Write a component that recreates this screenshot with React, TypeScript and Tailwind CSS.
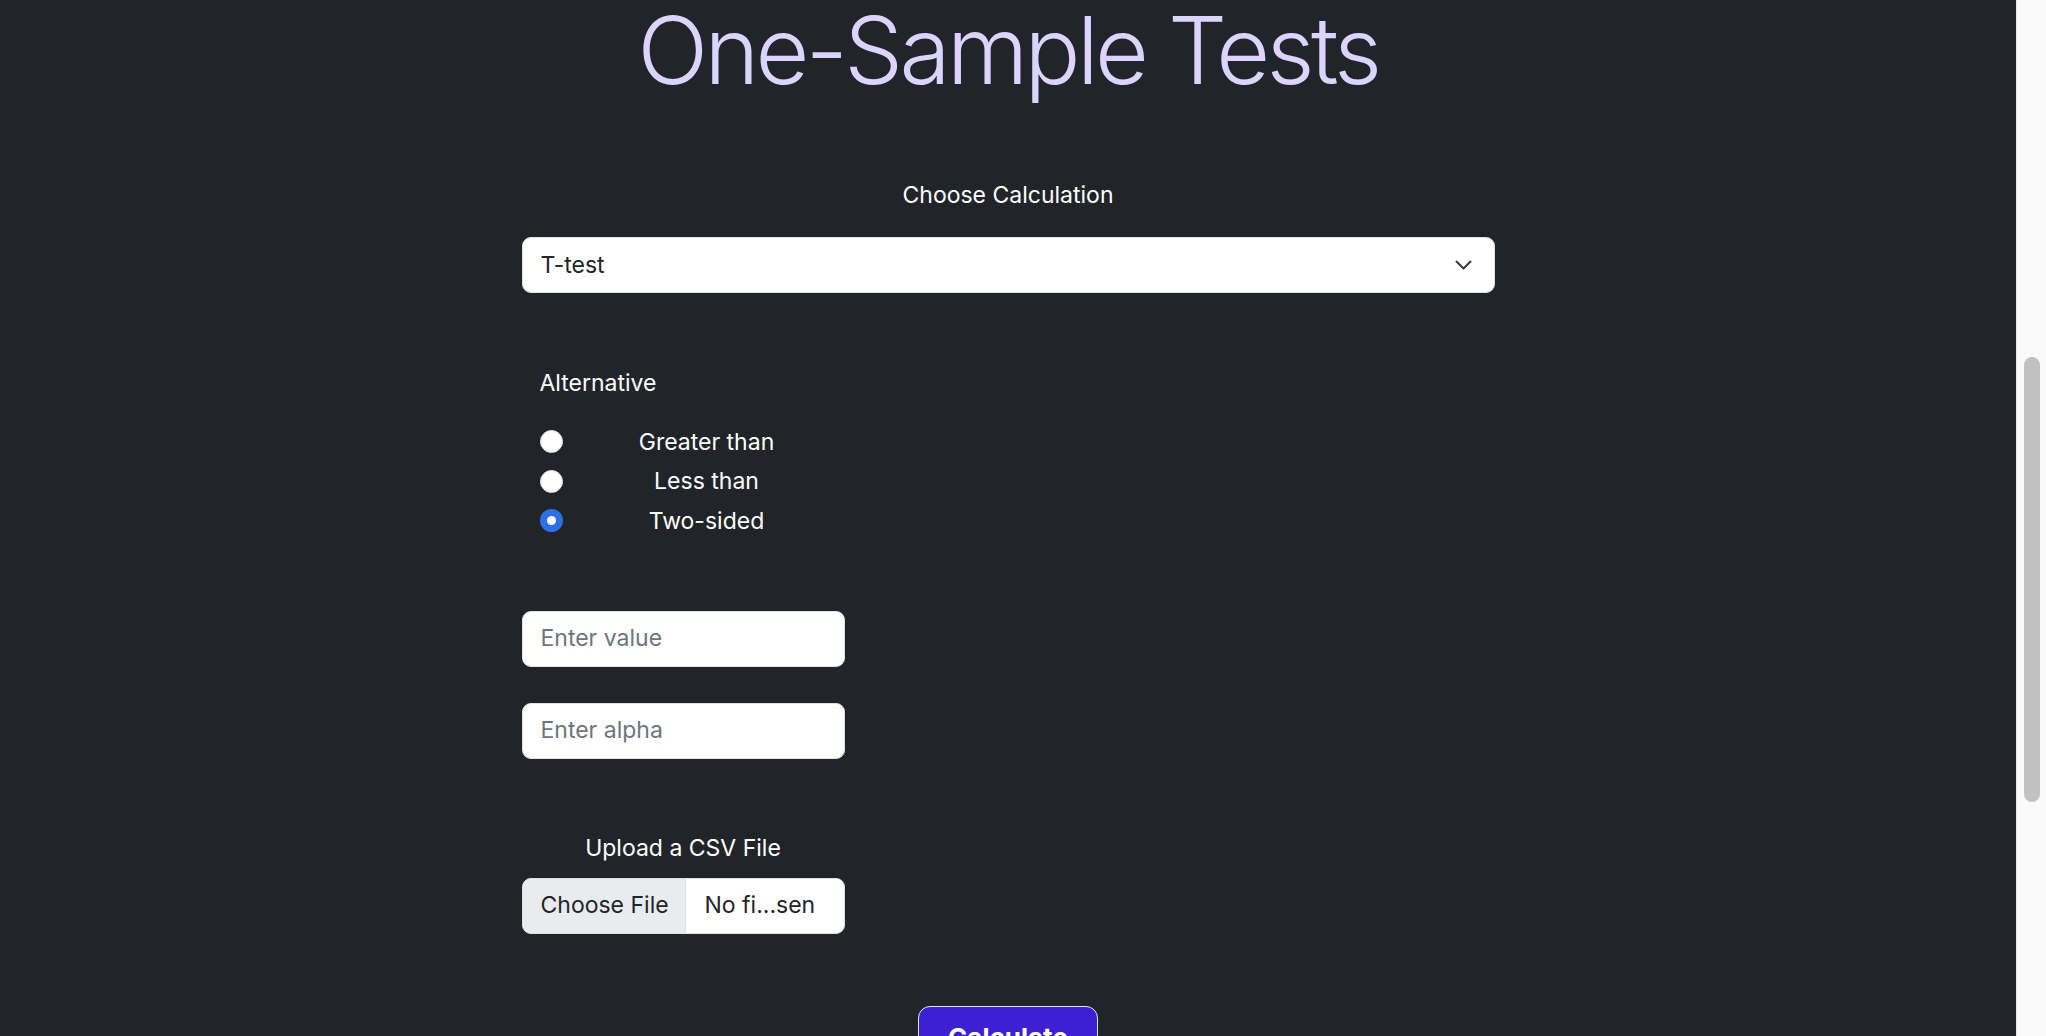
import { useState } from "react";

const options = ["Greater than", "Less than", "Two-sided"];

function Radio({ checked }: { checked: boolean }) {
    if (checked) {
        return (
            <span className="flex h-[23px] w-[23px] shrink-0 items-center justify-center rounded-full bg-[#2f6fe6]">
                <span className="h-[9px] w-[9px] rounded-full bg-white" />
            </span>
        );
    }
    return <span className="h-[23px] w-[23px] shrink-0 rounded-full border border-[#dee2e6] bg-white" />;
}

export default function App() {
    const [alt, setAlt] = useState("Two-sided");

    return (
        <div
            className="flex h-[1036px] overflow-hidden bg-[#212529] text-white"
            style={{ fontFamily: "Inter, 'Liberation Sans', sans-serif" }}
        >
            <main className="flex flex-1 flex-col items-center">
                <h1 className="mt-[-3px] text-[93px] font-light leading-[107px] tracking-[-3.6px] text-[#dcd3fe]">
                    One-Sample Tests
                </h1>

                <div className="flex w-[973px] flex-col text-[23px]">
                    <p className="mt-[75px] text-center leading-[33px]">Choose Calculation</p>

                    <div className="mt-[25px] flex h-[56px] items-center justify-between rounded-[9px] border border-[#dee2e6] bg-white pl-[18px] pr-[22px] text-[#212529]">
                        <span>T-test</span>
                        <svg width="17" height="10" viewBox="0 0 17 10" fill="none">
                            <polyline points="1.5,1.5 8.5,8.5 15.5,1.5" stroke="#343a40" strokeWidth="2" strokeLinecap="round" strokeLinejoin="round" />
                        </svg>
                    </div>

                    <div className="pl-[18px]">
                        <p className="mt-[74px] leading-[33px]">Alternative</p>
                        <div className="mt-[22px] flex flex-col">
                            {options.map((o) => (
                                <label key={o} className="flex h-[39.5px] w-[311px] cursor-pointer items-center" onClick={() => setAlt(o)}>
                                    <Radio checked={alt === o} />
                                    <span className="flex-1 text-center">{o}</span>
                                </label>
                            ))}
                        </div>
                    </div>

                    <div className="mt-[70px] flex h-[56px] w-[323px] items-center rounded-[9px] border border-[#dee2e6] bg-white px-[18px] text-[#6c757d]">
                        Enter value
                    </div>
                    <div className="mt-[36px] flex h-[56px] w-[323px] items-center rounded-[9px] border border-[#dee2e6] bg-white px-[18px] text-[#6c757d]">
                        Enter alpha
                    </div>

                    <div className="w-[323px]">
                        <p className="mt-[73px] text-center leading-[33px]">Upload a CSV File</p>
                        <div className="mt-[13px] flex h-[56px] overflow-hidden rounded-[9px] border border-[#dee2e6] bg-white text-[#212529]">
                            <span className="flex w-[163px] shrink-0 items-center whitespace-nowrap border-r border-[#dee2e6] bg-[#e9ecef] pl-[18px]">
                                Choose File
                            </span>
                            <span className="flex items-center whitespace-nowrap pl-[19px]">No fi...sen</span>
                        </div>
                    </div>

                    <div className="mt-[72px] flex justify-center">
                        <button className="h-[64px] w-[180px] rounded-[12px] border border-[#e6e2f5] bg-[#3d1fd4] text-[26px] font-bold text-white">
                            Calculate
                        </button>
                    </div>
                </div>
            </main>

            {/* scrollbar */}
            <div className="flex w-[30px] justify-center border-l border-[#e8e8e8] bg-[#fafafa] pt-[357px]">
                <div className="h-[445px] w-[16px] rounded-full bg-[#c1c1c1]" />
            </div>
        </div>
    );
}
